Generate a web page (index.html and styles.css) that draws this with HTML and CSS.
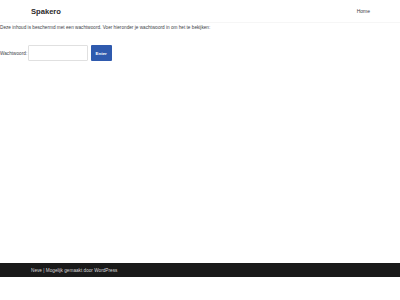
FILE: index.html
```html
<!DOCTYPE html>
<html lang="nl">
<head>
  <meta charset="UTF-8">
  <title>Spakero</title>
  <link rel="stylesheet" href="styles.css">
</head>
<body>
  <header class="site-header">
    <div class="container header-row">
      <a class="brand" href="#">Spakero</a>
      <nav class="nav"><a href="#">Home</a></nav>
    </div>
  </header>

  <main class="content">
    <form class="post-password-form">
      <p class="intro">Deze inhoud is beschermd met een wachtwoord. Voer hieronder je wachtwoord in om het te bekijken:</p>
      <p class="field-row">
        <label for="pwd">Wachtwoord:</label>
        <input type="password" id="pwd" class="pwd-input">
        <button type="button" class="enter-btn">Enter</button>
      </p>
    </form>
  </main>

  <footer class="site-footer">
    <div class="container">
      <span>Neve | Mogelijk gemaakt door WordPress</span>
    </div>
  </footer>
</body>
</html>
```

FILE: styles.css
```css
html, body {
  margin: 0;
  padding: 0;
  height: 100%;
}

body {
  font-family: "Liberation Sans", Arial, sans-serif;
  font-size: 4.7px;
  color: #404248;
  background-color: #ffffff;
  display: flex;
  flex-direction: column;
  width: 400px;
  height: 300px;
}

a {
  text-decoration: none;
  color: inherit;
}

.container {
  padding: 0 30px 0 31px;
}

.site-header {
  height: 22px;
  border-bottom: 1px solid #f6f6f6;
}

.header-row {
  display: flex;
  justify-content: space-between;
  align-items: center;
  height: 22px;
}

.brand {
  font-size: 7.6px;
  font-weight: bold;
  color: #2b2b2b;
}

.nav {
  font-size: 5px;
  line-height: 6px;
  color: #404248;
}

.content {
  flex: 1;
}

.post-password-form p {
  margin: 0;
}

.intro {
  padding-top: 2px;
  line-height: 6px;
}

.field-row {
  display: flex;
  align-items: center;
  margin-top: 14px !important;
}

.pwd-input {
  width: 60px;
  height: 16px;
  box-sizing: border-box;
  border: 1px solid #e0e0e0;
  border-radius: 1px;
  margin: 0 2px 0 0.5px;
  padding: 0;
}

.enter-btn {
  width: 21px;
  height: 16px;
  border: none;
  border-radius: 1px;
  background-color: #2f5aae;
  color: #ffffff;
  font-family: inherit;
  font-size: 4.4px;
  font-weight: bold;
  padding: 0;
  margin-left: 1px;
}

.site-footer {
  background-color: #1a1a1a;
  color: #d8d8d8;
  height: 14px;
  display: flex;
  align-items: center;
  margin-bottom: 23px;
}
```
